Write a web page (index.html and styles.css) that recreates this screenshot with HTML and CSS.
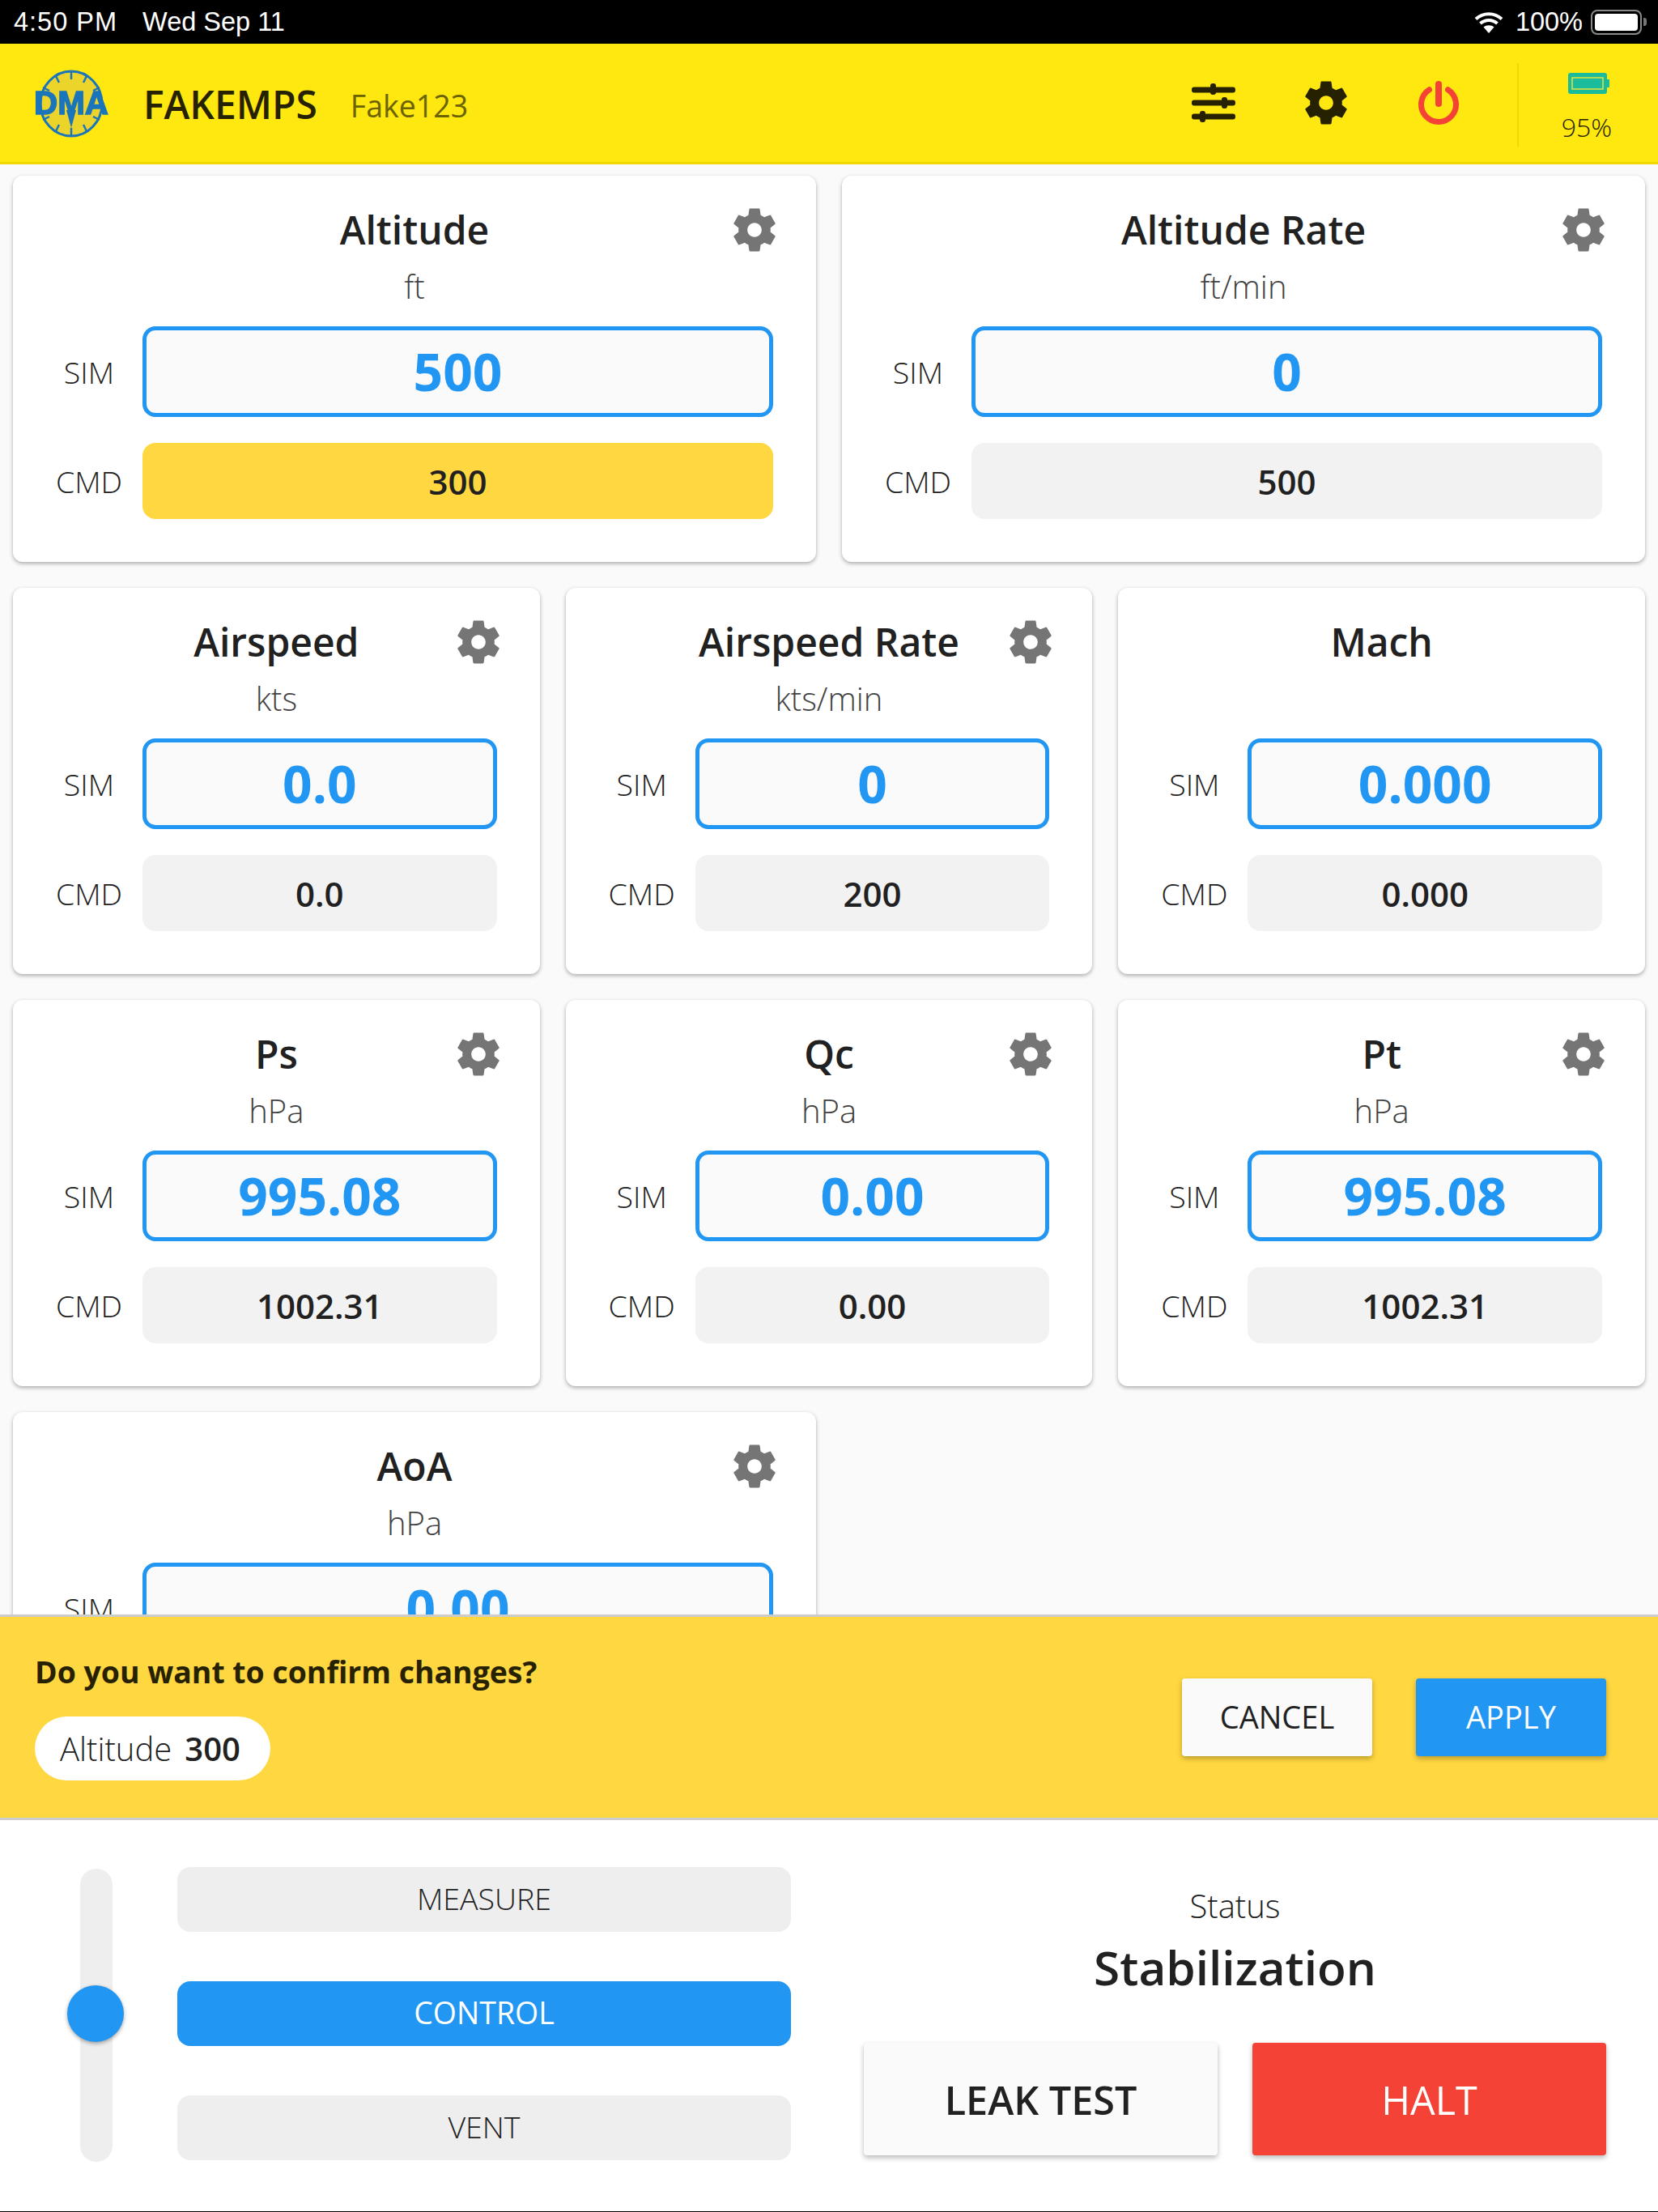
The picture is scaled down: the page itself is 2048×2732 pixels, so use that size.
FILE: index.html
```html
<!DOCTYPE html>
<html lang="en">
<head>
<meta charset="utf-8">
<title>FAKEMPS</title>
<link rel="stylesheet" href="styles.css">
</head>
<body>
<svg class="defs" width="0" height="0" aria-hidden="true">
  <symbol id="gear" viewBox="0 0 24 24">
    <path d="M19.14 12.94c.04-.3.06-.61.06-.94 0-.32-.02-.64-.07-.94l2.03-1.58c.18-.14.23-.41.12-.61l-1.92-3.32c-.12-.22-.37-.29-.59-.22l-2.39.96c-.5-.38-1.03-.7-1.62-.94l-.36-2.54c-.04-.24-.24-.41-.48-.41h-3.84c-.24 0-.43.17-.47.41l-.36 2.54c-.59.24-1.13.57-1.62.94l-2.39-.96c-.22-.08-.47 0-.59.22L2.74 8.87c-.12.21-.08.47.12.61l2.03 1.58c-.05.3-.09.63-.09.94s.02.64.07.94l-2.03 1.58c-.18.14-.23.41-.12.61l1.92 3.32c.12.22.37.29.59.22l2.39-.96c.5.38 1.03.7 1.62.94l.36 2.54c.05.24.24.41.48.41h3.84c.24 0 .44-.17.47-.41l.36-2.54c.59-.24 1.13-.56 1.62-.94l2.39.96c.22.08.47 0 .59-.22l1.92-3.32c.12-.22.07-.47-.12-.61l-2.01-1.58zM12 15.200c-1.77 0-3.200-1.43-3.200-3.200s1.43-3.200 3.200-3.200 3.200 1.43 3.200 3.200-1.43 3.200-3.200 3.200z"/>
  </symbol>
</svg>
<div class="app">
  <div class="status">
    <div class="status-left"><span class="status-time">4:50 PM</span><span>Wed Sep 11</span></div>
    <div class="status-right">
      <svg class="wifi" viewBox="0 0 36 28" width="36" height="28"><path d="M2 10.500C11 2 25 2 34 10.500M7.500 16C13.500 10.500 22.500 10.500 28.500 16" fill="none" stroke="#fff" stroke-width="4"/><path d="M18 28l-6.500-7.500C15 17.500 21 17.500 24.500 20.500z" fill="#fff"/></svg>
      <span class="status-pct">100%</span>
      <span class="ios-battery"><span class="ios-battery-fill"></span></span>
      <span class="ios-battery-cap"></span>
    </div>
  </div>

  <header class="header">
    <svg class="logo" viewBox="0 0 96 84" width="96" height="84">
      <defs><filter id="soft" x="-10%" y="-10%" width="120%" height="120%"><feGaussianBlur stdDeviation="0.5"/></filter></defs>
      <g filter="url(#soft)">
        <ellipse cx="47" cy="42" rx="38" ry="40" fill="#ecd42a" stroke="#1a75bb" stroke-width="3"/>
        <path d="M47 3v9M47 72v9M28 8l4 8M66 8l-4 8M28 76l4-8M66 76l-4-8M12 22l8 4M82 22l-8 4M12 62l8-4M82 62l-8-4" stroke="#1a75bb" stroke-width="2.500"/>
        <path d="M41 50h12l-6 22z" fill="#1a75bb"/>
        <text class="logo-text" x="47" y="55" text-anchor="middle" textLength="92" lengthAdjust="spacingAndGlyphs">DMA</text>
      </g>
    </svg>
    <span class="app-name">FAKEMPS</span>
    <span class="device-name">Fake123</span>
    <div class="header-actions">
      <svg class="tune" viewBox="0 0 54 48" width="54" height="48">
        <g fill="#262100">
          <rect x="0" y="4.500" width="54" height="7" rx="3"/>
          <rect x="0" y="20.500" width="54" height="7" rx="3"/>
          <rect x="0" y="37.500" width="54" height="7" rx="3"/>
          <rect x="23" y="0" width="7" height="14" rx="3"/>
          <rect x="37" y="17" width="7" height="14" rx="3"/>
          <rect x="10" y="34" width="7" height="14" rx="3"/>
        </g>
      </svg>
      <svg class="header-gear"><use href="#gear"/></svg>
      <svg class="power" viewBox="0 0 54 54" width="54" height="54">
        <path d="M15.500 10.800A21.500 21.500 0 1 0 38.500 10.800" fill="none" stroke="#f44336" stroke-width="7" stroke-linecap="round"/>
        <path d="M27 4v24" fill="none" stroke="#f44336" stroke-width="8" stroke-linecap="round"/>
      </svg>
    </div>
    <div class="device-battery">
      <svg viewBox="0 0 51 26" width="51" height="26">
        <path d="M3 0h42a3 3 0 0 1 3 3v5h3v10h-3v5a3 3 0 0 1-3 3H3a3 3 0 0 1-3-3V3a3 3 0 0 1 3-3z" fill="#1abc9c"/>
        <rect x="5" y="6" width="38" height="14" fill="#1abc9c" stroke="#e8e23a" stroke-width="1.500"/>
      </svg>
      <span class="device-pct">95%</span>
    </div>
  </header>

  <main class="main">
    <section class="card wide">
      <h2 class="title">Altitude</h2><svg class="card-gear"><use href="#gear"/></svg>
      <div class="unit">ft</div>
      <div class="row"><span class="label">SIM</span><div class="sim">500</div></div>
      <div class="row cmd-row"><span class="label">CMD</span><div class="cmd pending">300</div></div>
    </section>
    <section class="card wide">
      <h2 class="title">Altitude Rate</h2><svg class="card-gear"><use href="#gear"/></svg>
      <div class="unit">ft/min</div>
      <div class="row"><span class="label">SIM</span><div class="sim">0</div></div>
      <div class="row cmd-row"><span class="label">CMD</span><div class="cmd">500</div></div>
    </section>
    <section class="card">
      <h2 class="title">Airspeed</h2><svg class="card-gear"><use href="#gear"/></svg>
      <div class="unit">kts</div>
      <div class="row"><span class="label">SIM</span><div class="sim">0.0</div></div>
      <div class="row cmd-row"><span class="label">CMD</span><div class="cmd">0.0</div></div>
    </section>
    <section class="card">
      <h2 class="title">Airspeed Rate</h2><svg class="card-gear"><use href="#gear"/></svg>
      <div class="unit">kts/min</div>
      <div class="row"><span class="label">SIM</span><div class="sim">0</div></div>
      <div class="row cmd-row"><span class="label">CMD</span><div class="cmd">200</div></div>
    </section>
    <section class="card">
      <h2 class="title">Mach</h2>
      <div class="unit">&nbsp;</div>
      <div class="row"><span class="label">SIM</span><div class="sim">0.000</div></div>
      <div class="row cmd-row"><span class="label">CMD</span><div class="cmd">0.000</div></div>
    </section>
    <section class="card">
      <h2 class="title">Ps</h2><svg class="card-gear"><use href="#gear"/></svg>
      <div class="unit">hPa</div>
      <div class="row"><span class="label">SIM</span><div class="sim">995.08</div></div>
      <div class="row cmd-row"><span class="label">CMD</span><div class="cmd">1002.31</div></div>
    </section>
    <section class="card">
      <h2 class="title">Qc</h2><svg class="card-gear"><use href="#gear"/></svg>
      <div class="unit">hPa</div>
      <div class="row"><span class="label">SIM</span><div class="sim">0.00</div></div>
      <div class="row cmd-row"><span class="label">CMD</span><div class="cmd">0.00</div></div>
    </section>
    <section class="card">
      <h2 class="title">Pt</h2><svg class="card-gear"><use href="#gear"/></svg>
      <div class="unit">hPa</div>
      <div class="row"><span class="label">SIM</span><div class="sim">995.08</div></div>
      <div class="row cmd-row"><span class="label">CMD</span><div class="cmd">1002.31</div></div>
    </section>
    <section class="card wide">
      <h2 class="title">AoA</h2><svg class="card-gear"><use href="#gear"/></svg>
      <div class="unit">hPa</div>
      <div class="row"><span class="label">SIM</span><div class="sim">0.00</div></div>
    </section>
  </main>

  <section class="confirm">
    <div class="confirm-info">
      <div class="question">Do you want to confirm changes?</div>
      <div class="chip"><span class="chip-name">Altitude</span><span class="chip-value">300</span></div>
    </div>
    <div class="confirm-actions">
      <button class="action cancel">CANCEL</button>
      <button class="action apply">APPLY</button>
    </div>
  </section>

  <section class="controls">
    <div class="slider"><span class="thumb"></span></div>
    <div class="modes">
      <div class="mode">MEASURE</div>
      <div class="mode active">CONTROL</div>
      <div class="mode">VENT</div>
    </div>
    <div class="run">
      <div class="status-label">Status</div>
      <div class="status-value">Stabilization</div>
      <div class="run-actions">
        <button class="big leak">LEAK TEST</button>
        <button class="big halt">HALT</button>
      </div>
    </div>
  </section>
</div>
</body>
</html>
```

FILE: styles.css
```css
* { box-sizing: border-box; }
html, body { margin: 0; padding: 0; }
body {
  width: 2048px;
  height: 2732px;
  overflow: hidden;
  background: #fff;
  color: #212121;
  font-family: "Open Sans", "Noto Sans", sans-serif;
}
.defs { position: absolute; }
.app { height: 2732px; display: flex; flex-direction: column; }

/* iOS status bar */
.status {
  height: 54px;
  flex: none;
  background: #000;
  color: #fff;
  display: flex;
  justify-content: space-between;
  align-items: center;
  padding: 0 14px 0 17px;
  font-family: "Liberation Sans", sans-serif;
  font-size: 32.5px;
}
.status-left { display: flex; gap: 31px; }
.status-time { letter-spacing: 1px; }
.status-right { display: flex; align-items: center; }
.wifi { margin-right: 15px; }
.status-pct { margin-right: 10px; }
.ios-battery {
  width: 63px;
  height: 31px;
  border: 2px solid #8a8a8a;
  border-radius: 8px;
  padding: 3px;
  display: block;
}
.ios-battery-fill { display: block; height: 100%; background: #fff; border-radius: 4px; }
.ios-battery-cap {
  width: 4px;
  height: 10px;
  margin-left: 2px;
  background: #777;
  border-radius: 0 3px 3px 0;
}

/* App header */
.header {
  height: 149px;
  flex: none;
  background: #ffe80f;
  border-bottom: 3px solid #efd800;
  display: flex;
  align-items: center;
  padding-left: 41px;
  color: #262100;
}
.logo { flex: none; margin-top: 2px; }
.logo-text { font-family: "Liberation Sans", sans-serif; font-weight: 700; font-size: 40px; fill: #1a75bb; stroke: #1a75bb; stroke-width: 1.500; }
.app-name { margin-left: 40px; font-size: 48px; font-weight: 600; line-height: 60px; margin-top: 4px; }
.device-name { margin-left: 41px; font-size: 37.5px; color: #6b6200; line-height: 50px; margin-top: 8px; }
.header-actions {
  margin-left: auto;
  display: flex;
  align-items: center;
  gap: 87px;
  padding: 0 70px 5px 0;
  height: 103px;
  border-right: 2px solid #efd800;
  margin-top: 5px;
}
.header-gear { width: 66px; height: 66px; fill: #262100; margin: 0 -8px; }
.device-battery {
  width: 172px;
  display: flex;
  flex-direction: column;
  align-items: center;
  gap: 12px;
  margin-top: 8px;
}
.device-pct { font-size: 32px; font-weight: 300; line-height: 44px; position: relative; top: 7px; left: -2px; }

/* Scrolling grid of cards */
.main {
  flex: 1 1 0;
  min-height: 0;
  overflow: hidden;
  background: #fafafa;
  padding: 14px 16px 0;
  display: grid;
  grid-template-columns: repeat(6, 1fr);
  grid-auto-rows: 477px;
  gap: 32px;
  align-content: start;
}
.card {
  grid-column: span 2;
  position: relative;
  background: #fff;
  border-radius: 12px;
  box-shadow: 0 2px 5px rgba(0, 0, 0, .32);
  padding: 37px 53px 0 28px;
}
.card.wide { grid-column: span 3; }
.title {
  margin: 0 -53px 0 -28px;
  font-size: 48px;
  font-weight: 600;
  line-height: 60px;
  text-align: center;
  color: #212121;
}
.card-gear { position: absolute; top: 34px; right: 43px; width: 66px; height: 66px; fill: #757575; }
.unit {
  margin: 18px -53px 27px -28px;
  font-size: 40px;
  font-weight: 300;
  line-height: 44px;
  text-align: center;
  color: #424242;
}
.row { display: flex; align-items: center; }
.cmd-row { margin-top: 32px; }
.label { flex: 0 0 132px; font-size: 37.5px; font-weight: 300; text-align: center; color: #212121; }
.sim {
  flex: 1;
  height: 112px;
  border: 5px solid #2196f3;
  border-radius: 16px;
  background: #fafafa;
  color: #2196f3;
  font-size: 64px;
  font-weight: 700;
  line-height: 102px;
  text-align: center;
}
.cmd {
  flex: 1;
  height: 94px;
  border-radius: 16px;
  background: #f2f2f2;
  font-size: 42px;
  font-weight: 600;
  line-height: 96px;
  text-align: center;
  color: #212121;
}
.cmd.pending { background: #ffd740; }

/* Confirmation banner */
.confirm {
  height: 254px;
  flex: none;
  background: #ffd740;
  border-top: 3px solid #ccc;
  border-bottom: 3px solid #ccc;
  display: flex;
  justify-content: space-between;
  align-items: center;
  padding: 0 64px 0 43px;
  position: relative;
}
.confirm-info { padding-bottom: 4px; }
.question { font-size: 37.4px; font-weight: 700; line-height: 50px; color: #262100; }
.chip {
  margin-top: 30px;
  width: 291px;
  height: 79px;
  border-radius: 40px;
  background: #fff;
  display: flex;
  align-items: center;
  padding-left: 31px;
  font-size: 40px;
  color: #212121;
}
.chip-name { font-weight: 300; }
.chip-value { font-weight: 600; margin-left: 16px; }
.confirm-actions { display: flex; gap: 54px; }
.action {
  width: 235px;
  height: 96px;
  border: 0;
  border-radius: 4px;
  font: 400 38px "Open Sans", sans-serif;
  box-shadow: 0 3px 6px rgba(0, 0, 0, .28);
  padding: 0 0 2px;
}
.cancel { background: #fafafa; color: #212121; }
.apply { background: #2196f3; color: #fff; }

/* Bottom controls */
.controls {
  flex: none;
  height: 484px;
  display: flex;
  background: #fff;
  border-bottom: 1px solid #000;
  padding-left: 99px;
}
.slider {
  position: relative;
  width: 40px;
  height: 362px;
  margin-top: 60px;
  border-radius: 20px;
  background: #eee;
  flex: none;
}
.thumb {
  position: absolute;
  left: -16px;
  top: 144px;
  width: 70px;
  height: 70px;
  border-radius: 50%;
  background: #2196f3;
  box-shadow: 0 2px 5px rgba(0, 0, 0, .35);
}
.modes {
  margin: 58px 0 0 80px;
  width: 758px;
  flex: none;
  display: flex;
  flex-direction: column;
  gap: 61px;
}
.mode {
  height: 80px;
  border-radius: 16px;
  background: #eee;
  font-size: 37.5px;
  font-weight: 300;
  line-height: 78px;
  text-align: center;
  color: #212121;
}
.mode.active { background: #2196f3; color: #fff; font-weight: 500; }
.run { margin-left: 90px; width: 917px; flex: none; text-align: center; }
.status-label { margin-top: 83px; font-size: 40px; font-weight: 300; line-height: 46px; color: #212121; }
.status-value { margin-top: 20px; font-size: 58.5px; font-weight: 600; line-height: 64px; color: #212121; }
.run-actions { margin-top: 62px; display: flex; justify-content: space-between; }
.big {
  width: 437px;
  height: 139px;
  border: 0;
  border-radius: 4px;
  padding: 0;
  font: 600 48.5px "Open Sans", sans-serif;
  box-shadow: 0 3px 6px rgba(0, 0, 0, .28);
}
.leak { background: #fafafa; color: #212121; }
.halt { background: #f44336; color: #fff; font-weight: 500; }
```
